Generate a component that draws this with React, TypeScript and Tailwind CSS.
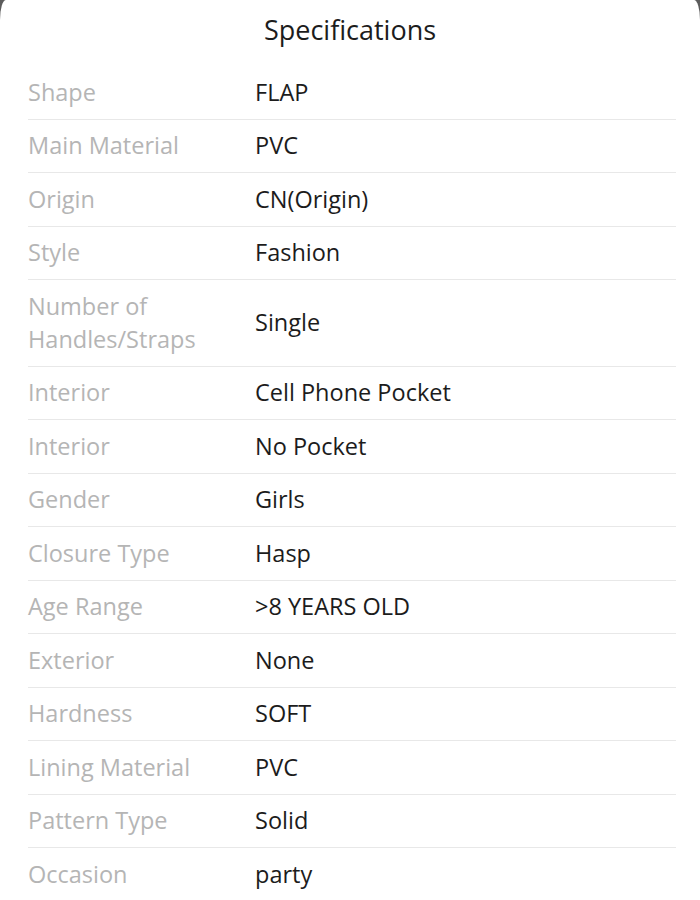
const specs: [string, string][] = [
  ["Shape", "FLAP"],
  ["Main Material", "PVC"],
  ["Origin", "CN(Origin)"],
  ["Style", "Fashion"],
  ["Number of Handles/Straps", "Single"],
  ["Interior", "Cell Phone Pocket"],
  ["Interior", "No Pocket"],
  ["Gender", "Girls"],
  ["Closure Type", "Hasp"],
  ["Age Range", ">8 YEARS OLD"],
  ["Exterior", "None"],
  ["Hardness", "SOFT"],
  ["Lining Material", "PVC"],
  ["Pattern Type", "Solid"],
  ["Occasion", "party"],
];

export default function App() {
  return (
    <div className="w-[700px] h-[900px] overflow-hidden bg-[#5c5c5c] font-['Open_Sans',sans-serif]">
      <div className="h-full bg-white rounded-tl-[6px_20px] rounded-tr-[6px_20px]">
        <h1 className="h-[66px] pt-[11px] text-center text-[27px] leading-[38px] text-[#1c1c1c]">
          Specifications
        </h1>
        <div className="pl-[28px] pr-[24px]">
          {specs.map(([label, value], i) => (
            <div
              key={i}
              className="flex items-center py-[9.75px] border-b border-[#e8e8e8]"
            >
              <div className="w-[227px] pr-[30px] text-[23.5px] leading-[33px] text-[#b5b5b5]">
                {label}
              </div>
              <div className="flex-1 text-[23.5px] leading-[33px] text-[#1c1c1c]">{value}</div>
            </div>
          ))}
        </div>
      </div>
    </div>
  );
}
